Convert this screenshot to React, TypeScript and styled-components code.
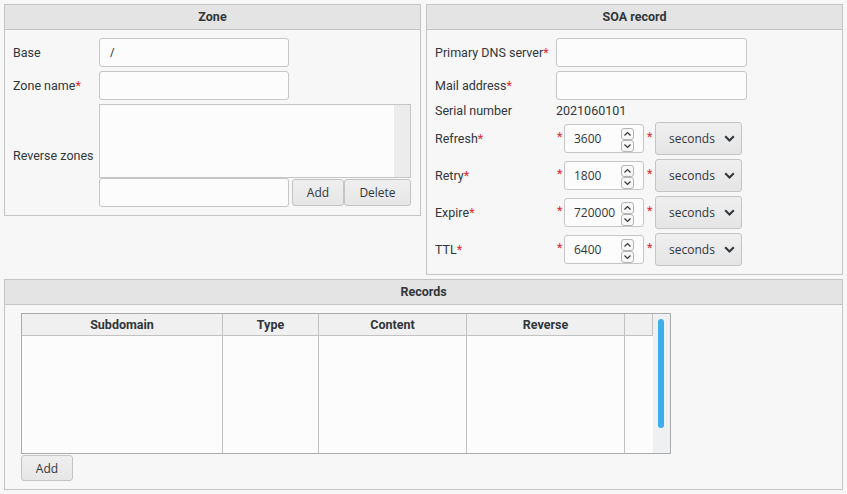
import React from "react";
import styled, { createGlobalStyle } from "styled-components";

const Global = createGlobalStyle`
  html, body { margin: 0; padding: 0; }
  body {
    background: #f7f7f7;
    font-family: Roboto, "Liberation Sans", sans-serif;
    font-size: 12.5px;
    color: #31363b;
  }
  * { box-sizing: border-box; }
`;

const Page = styled.div`
  padding: 4px;
  display: grid;
  grid-template-columns: 417px 417px;
  column-gap: 5px;
  row-gap: 4px;
  align-items: start;
`;

const Panel = styled.section<{ $wide?: boolean }>`
  border: 1px solid #c4c4c4;
  background: #f7f7f7;
  grid-column: ${(p) => (p.$wide ? "1 / span 2" : "auto")};
`;

const PanelHeader = styled.div`
  height: 25px;
  line-height: 24px;
  background: #e4e4e4;
  border-bottom: 1px solid #c4c4c4;
  text-align: center;
  font-weight: bold;
  color: #31363b;
`;

const FormBody = styled.div<{ $labelWidth: number }>`
  padding: 8px 9px 8px 8px;
  display: grid;
  grid-template-columns: ${(p) => p.$labelWidth}px 1fr;
  row-gap: 4px;
  align-items: center;
  line-height: 14px;
`;

const Label = styled.div`
  white-space: nowrap;
`;

const Req = styled.span`
  color: #e0282e;
`;

const TextInput = styled.div<{ $w?: number }>`
  width: ${(p) => p.$w ?? 190}px;
  height: 29px;
  border: 1px solid #c6c6c6;
  border-radius: 3px;
  background: #fcfcfc;
  font-family: "Open Sans", sans-serif;
  font-size: 12px;
  line-height: 27px;
  padding-left: 10px;
  color: #31363b;
`;

const ListBox = styled.div`
  width: 312px;
  height: 74px;
  border: 1px solid #c6c6c6;
  background: #fcfcfc;
  display: flex;
  justify-content: flex-end;
`;

const ListTrack = styled.div`
  width: 16px;
  background: #ececec;
`;

const Stack = styled.div`
  display: flex;
  flex-direction: column;
`;

const InlineRow = styled.div`
  display: flex;
  align-items: center;
`;

const Button = styled.button<{ $w: number; $h?: number; $ml?: number }>`
  width: ${(p) => p.$w}px;
  height: ${(p) => p.$h ?? 27}px;
  margin-left: ${(p) => p.$ml ?? 0}px;
  border: 1px solid #c4c4c4;
  border-radius: 3px;
  background: linear-gradient(#efefef, #e6e6e6);
  font-family: "Open Sans", sans-serif;
  font-size: 12px;
  color: #31363b;
  padding: 0;
`;

const SoaBody = styled(FormBody)`
  padding: 8px;
`;

const PlainValue = styled.div`
  height: 14px;
  line-height: 14px;
`;

const Star = styled.span<{ $w: number; $pl: number }>`
  width: ${(p) => p.$w}px;
  padding-left: ${(p) => p.$pl}px;
  color: #e0282e;
  align-self: flex-start;
  margin-top: 8px;
`;

const NumberBox = styled.div`
  width: 80px;
  height: 29px;
  border: 1px solid #c6c6c6;
  border-radius: 3px;
  background: #fcfcfc;
  display: flex;
  align-items: center;
  justify-content: space-between;
  padding: 0 9px;
  font-family: "Open Sans", sans-serif;
  font-size: 12px;
`;

const Spinner = styled.div`
  display: flex;
  flex-direction: column;
  margin-top: 2px;
`;

const SpinBtn = styled.div`
  width: 13px;
  height: 12px;
  border: 1px solid #b4b4b4;
  border-radius: 3px;
  background: #f8f8f8;
  display: flex;
  align-items: center;
  justify-content: center;
`;

const Select = styled.div`
  width: 87px;
  height: 33px;
  border: 1px solid #c4c4c4;
  border-radius: 3px;
  background: linear-gradient(#efefef, #e5e5e5);
  display: flex;
  align-items: center;
  padding-left: 13px;
  gap: 9px;
  font-family: "Open Sans", sans-serif;
  font-size: 12px;
`;

const RecordsBody = styled.div`
  padding: 8px 16px;
`;

const Table = styled.div`
  width: 650px;
  height: 141px;
  border: 1px solid #ababab;
  background: #fcfcfc;
  display: flex;
`;

const Grid = styled.div`
  flex: 1;
  display: grid;
  grid-template-columns: 201px 96px 148px 158px 28px;
  grid-template-rows: 22px 1fr;
`;

const HeadCell = styled.div`
  background: #f0f0f0;
  border-right: 1px solid #c2c2c2;
  border-bottom: 1px solid #c2c2c2;
  text-align: center;
  line-height: 21px;
  font-weight: bold;
`;

const BodyCell = styled.div<{ $last?: boolean }>`
  border-right: ${(p) => (p.$last ? "none" : "1px solid #c2c2c2")};
`;

const Track = styled.div`
  width: 17px;
  background: #eff0f1;
  padding: 5px 0 0 5px;
`;

const Thumb = styled.div`
  width: 6px;
  height: 109px;
  border-radius: 3px;
  background: #3daee9;
`;

const AddRow = styled.div`
  margin-top: 1px;
`;

const Up = () => (
  <svg width="9" height="6" viewBox="0 0 9 6">
    <path d="M1.5 4.5 L4.5 1.5 L7.5 4.5" fill="none" stroke="#31363b" strokeWidth="1.2" />
  </svg>
);
const Down = () => (
  <svg width="9" height="6" viewBox="0 0 9 6">
    <path d="M1.5 1.5 L4.5 4.5 L7.5 1.5" fill="none" stroke="#31363b" strokeWidth="1.2" />
  </svg>
);
const Chevron = () => (
  <svg width="11" height="7" viewBox="0 0 11 7">
    <path d="M1.2 1.2 L5.5 5.5 L9.8 1.2" fill="none" stroke="#31363b" strokeWidth="2" />
  </svg>
);

const durations = [
  { label: "Refresh", value: "3600" },
  { label: "Retry", value: "1800" },
  { label: "Expire", value: "720000" },
  { label: "TTL", value: "6400" },
];

const columns = ["Subdomain", "Type", "Content", "Reverse", ""];

export default function App() {
  return (
    <>
      <Global />
      <Page>
        <Panel>
          <PanelHeader>Zone</PanelHeader>
          <FormBody $labelWidth={86}>
            <Label>Base</Label>
            <TextInput>/</TextInput>
            <Label>
              Zone name<Req>*</Req>
            </Label>
            <TextInput />
            <Label>Reverse zones</Label>
            <Stack>
              <ListBox>
                <ListTrack />
              </ListBox>
              <InlineRow>
                <TextInput />
                <Button $w={52} $ml={3}>Add</Button>
                <Button $w={67}>Delete</Button>
              </InlineRow>
            </Stack>
          </FormBody>
        </Panel>
        <Panel>
          <PanelHeader>SOA record</PanelHeader>
          <SoaBody $labelWidth={121}>
            <Label>
              Primary DNS server<Req>*</Req>
            </Label>
            <TextInput $w={191} />
            <Label>
              Mail address<Req>*</Req>
            </Label>
            <TextInput $w={191} />
            <Label>Serial number</Label>
            <PlainValue>2021060101</PlainValue>
            {durations.map((d) => (
              <React.Fragment key={d.label}>
                <Label>
                  {d.label}
                  <Req>*</Req>
                </Label>
                <InlineRow>
                  <Star $w={8} $pl={1}>*</Star>
                  <NumberBox>
                    <span>{d.value}</span>
                    <Spinner>
                      <SpinBtn>
                        <Up />
                      </SpinBtn>
                      <SpinBtn>
                        <Down />
                      </SpinBtn>
                    </Spinner>
                  </NumberBox>
                  <Star $w={11} $pl={3}>*</Star>
                  <Select>
                    <span>seconds</span>
                    <Chevron />
                  </Select>
                </InlineRow>
              </React.Fragment>
            ))}
          </SoaBody>
        </Panel>
        <Panel $wide>
          <PanelHeader>Records</PanelHeader>
          <RecordsBody>
            <Table>
              <Grid>
                {columns.map((c, i) => (
                  <HeadCell key={"h" + i}>{c}</HeadCell>
                ))}
                {columns.map((c, i) => (
                  <BodyCell key={"b" + i} $last={i === columns.length - 1} />
                ))}
              </Grid>
              <Track>
                <Thumb />
              </Track>
            </Table>
            <AddRow>
              <Button $w={52} $h={26}>Add</Button>
            </AddRow>
          </RecordsBody>
        </Panel>
      </Page>
    </>
  );
}
